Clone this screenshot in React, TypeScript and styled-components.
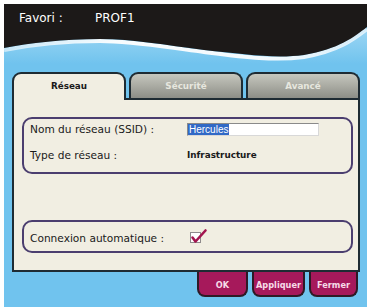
import React from "react";
import styled, { createGlobalStyle } from "styled-components";

const GlobalStyle = createGlobalStyle`
  html, body {
    margin: 0;
    padding: 0;
    background: #ffffff;
  }
  body {
    font-family: "DejaVu Sans", Verdana, sans-serif;
  }
`;

const Screen = styled.div`
  margin: 4px 0 0 4px;
  width: 363px;
  height: 303px;
  background: #70c3ee;
  display: flex;
  flex-direction: column;
  overflow: hidden;
`;

const Header = styled.div`
  height: 23px;
  background: #1c1918;
  display: flex;
  align-items: flex-start;
  padding: 7px 0 0 15px;
  box-sizing: border-box;
  color: #ffffff;
  font-size: 12px;
  line-height: 14px;
`;

const HeaderLabel = styled.span`
  width: 76px;
`;

const Wave = styled.svg`
  display: block;
  width: 363px;
  height: 37px;
`;

const TabRow = styled.div`
  display: flex;
  gap: 3px;
  margin: 8px 7px 0 8px;
  position: relative;
  z-index: 1;
`;

const Tab = styled.div<{ $active?: boolean }>`
  flex: 1;
  height: 26px;
  box-sizing: border-box;
  border: 2px solid #1e2b33;
  border-bottom: none;
  border-radius: 9px 9px 0 0;
  display: flex;
  align-items: center;
  justify-content: center;
  font-size: 8.8px;
  font-weight: bold;
  background: ${(p) =>
    p.$active ? "#f1eee2" : "linear-gradient(#c6c7be, #8d8e87)"};
  color: ${(p) => (p.$active ? "#1a1a1a" : "#e6e6de")};
  margin-bottom: ${(p) => (p.$active ? "-2px" : "0")};
  height: ${(p) => (p.$active ? "28px" : "26px")};
  padding-bottom: ${(p) => (p.$active ? "2px" : "0")};
  align-self: flex-start;
`;

const Panel = styled.div`
  margin: 0 7px 0 8px;
  height: 174px;
  box-sizing: border-box;
  border: 2px solid #1e2b33;
  background: #f1eee2;
  padding: 17px 5px 0 8px;
  display: flex;
  flex-direction: column;
`;

const Group = styled.div<{ $height: number }>`
  height: ${(p) => p.$height}px;
  box-sizing: border-box;
  border: 2px solid #4b3e6f;
  border-radius: 10px;
  padding: 3px 6px 0 6px;
`;

const Row = styled.div<{ $top?: number; $height?: number }>`
  display: grid;
  grid-template-columns: 157px 1fr;
  align-items: center;
  height: ${(p) => p.$height ?? 14}px;
  margin-top: ${(p) => p.$top ?? 0}px;
  font-size: 10.6px;
  color: #1a1a1a;
`;

const Value = styled.span`
  font-size: 8.8px;
  font-weight: bold;
  color: #1a1a1a;
`;

const TextField = styled.div`
  width: 132px;
  height: 13px;
  box-sizing: border-box;
  background: #ffffff;
  border-top: 1px solid #8a8a8a;
  border-left: 1px solid #8a8a8a;
  border-right: 1px solid #d8d8d8;
  border-bottom: 1px solid #d8d8d8;
  display: flex;
  align-items: stretch;
  font-family: "Liberation Sans", Arial, sans-serif;
  font-size: 10px;
`;

const Selected = styled.span`
  background: #3169c6;
  color: #ffffff;
  padding: 0 1px;
  line-height: 12px;
`;

const Spacer = styled.div`
  height: 46px;
  flex: none;
`;

const CheckBox = styled.span`
  position: relative;
  display: inline-block;
  width: 11px;
  height: 11px;
  margin-left: 3px;
  box-sizing: border-box;
  background: #ffffff;
  border: 1px solid #8f8a8c;
`;

const CheckMark = styled.svg`
  position: absolute;
  left: 0;
  top: -5px;
  width: 16px;
  height: 16px;
  overflow: visible;
`;

const ButtonRow = styled.div`
  display: flex;
  justify-content: flex-end;
  gap: 4px;
  padding-right: 9px;
`;

const Button = styled.div<{ $width: number }>`
  width: ${(p) => p.$width}px;
  height: 25px;
  box-sizing: border-box;
  background: #a6195b;
  border: 2px solid #2e1a26;
  border-top: none;
  border-radius: 0 0 8px 8px;
  color: #f6dbe8;
  font-size: 8.2px;
  font-weight: bold;
  display: flex;
  align-items: center;
  justify-content: center;
  padding-top: 3px;
`;

export default function App() {
  return (
    <>
      <GlobalStyle />
      <Screen>
        <Header>
          <HeaderLabel>Favori :</HeaderLabel>
          <span>PROF1</span>
        </Header>
        <Wave viewBox="0 0 363 37">
          <defs>
            <linearGradient id="shine" x1="0" x2="1" y1="0" y2="0">
              <stop offset="0" stopColor="#ffffff" stopOpacity="0.6" />
              <stop offset="0.3" stopColor="#ffffff" stopOpacity="0.95" />
              <stop offset="0.75" stopColor="#ffffff" stopOpacity="0.9" />
              <stop offset="1" stopColor="#ffffff" stopOpacity="0.7" />
            </linearGradient>
            <linearGradient id="glow" x1="0" x2="0" y1="0" y2="1">
              <stop offset="0" stopColor="#b7e2f7" />
              <stop offset="1" stopColor="#70c3ee" />
            </linearGradient>
          </defs>
          <path
            d="M0,24 C25,19 60,15 96,15 C130,15 160,21 200,26 C240,31 270,35 300,31 C335,25 350,13 363,3 V37 H0 Z"
            fill="url(#glow)"
            opacity="0.6"
          />
          <path
            d="M0,23 C25,18 60,14 96,14 C130,14 160,20 200,25 C240,30 270,34 300,30 C335,24 350,12 363,2"
            fill="none"
            stroke="url(#shine)"
            strokeWidth="4"
          />
          <path
            d="M0,0 H363 V0 C350,10 335,22 300,28 C270,32 240,27 200,23 C160,18 130,12 96,12 C60,12 25,16 0,21 Z"
            fill="#1c1918"
          />
        </Wave>
        <TabRow>
          <Tab $active>Réseau</Tab>
          <Tab>Sécurité</Tab>
          <Tab>Avancé</Tab>
        </TabRow>
        <Panel>
          <Group $height={57}>
            <Row>
              <span>Nom du réseau (SSID) :</span>
              <TextField>
                <Selected>Hercules</Selected>
              </TextField>
            </Row>
            <Row $top={12}>
              <span>Type de réseau :</span>
              <Value>Infrastructure</Value>
            </Row>
          </Group>
          <Spacer />
          <Group $height={33}>
            <Row $height={26}>
              <span>Connexion automatique :</span>
              <span>
                <CheckBox>
                  <CheckMark viewBox="0 0 16 16">
                    <path
                      d="M1.5,9.5 L4.5,13.5 L14.5,2.5"
                      fill="none"
                      stroke="#a3154f"
                      strokeWidth="2.6"
                      strokeLinecap="round"
                      strokeLinejoin="round"
                    />
                  </CheckMark>
                </CheckBox>
              </span>
            </Row>
          </Group>
        </Panel>
        <ButtonRow>
          <Button $width={51}>OK</Button>
          <Button $width={53}>Appliquer</Button>
          <Button $width={49}>Fermer</Button>
        </ButtonRow>
      </Screen>
    </>
  );
}
